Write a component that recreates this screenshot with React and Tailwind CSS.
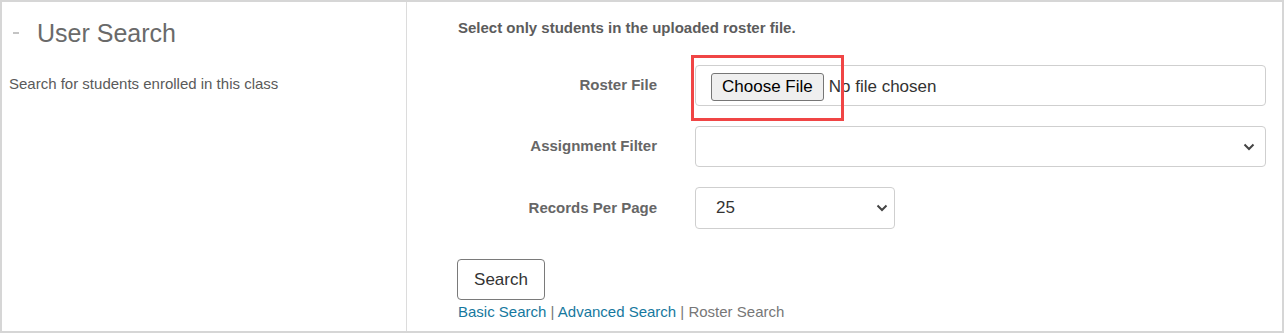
const Chevron = () => (
  <svg width="12" height="8" viewBox="0 0 12 8" className="shrink-0">
    <polyline points="1.5,1.5 6,6 10.5,1.5" fill="none" stroke="#444" strokeWidth="2" />
  </svg>
);

export default function App() {
  return (
    <div
      className="w-[1284px] h-[333px] border-2 border-[#d6d6d6] bg-white flex overflow-hidden"
      style={{ fontFamily: '"Liberation Sans", Arial, sans-serif' }}
    >
      {/* left panel */}
      <div className="w-[405px] shrink-0 border-r border-[#dcdcdc]">
        <div className="flex items-center pt-[16px] pl-[11px]">
          <span className="w-[6px] h-[2px] bg-[#c4c4c4]" />
          <h2 className="ml-[18px] text-[25px] leading-[30px] text-[#6a6a6a]">User Search</h2>
        </div>
        <p className="mt-[26px] pl-[7px] text-[15px] leading-[20px] text-[#5a5a5a]">
          Search for students enrolled in this class
        </p>
      </div>

      {/* right panel */}
      <div className="relative flex-1 pl-[50px] pr-[16px] pt-[16px]">
        <p className="pl-[1px] text-[15px] leading-[20px] font-bold text-[#5c5c5c]">
          Select only students in the uploaded roster file.
        </p>

        <div className="mt-[27px] grid grid-cols-[200px_1fr] gap-x-[38px] gap-y-[20px] items-center">
          <label className="text-right text-[15px] font-bold text-[#666]">Roster File</label>
          <div className="h-[41px] border border-[#cfcfcf] rounded-[4px] flex items-center pl-[15px] pt-[3px]">
            <span className="h-[28px] px-[10px] flex items-center bg-[#efefef] border border-[#767676] rounded-[3px] text-[17px] text-black">
              Choose File
            </span>
            <span className="ml-[5px] text-[17px] text-[#333]">No file chosen</span>
          </div>

          <label className="text-right text-[15px] font-bold text-[#666]">Assignment Filter</label>
          <div className="h-[41px] border border-[#cfcfcf] rounded-[4px] flex items-center justify-end pr-[10px]">
            <Chevron />
          </div>

          <label className="text-right text-[15px] font-bold text-[#666]">Records Per Page</label>
          <div className="w-[200px] h-[42px] border border-[#cfcfcf] rounded-[4px] flex items-center justify-between pl-[20px] pr-[6px]">
            <span className="text-[17px] text-[#333]">25</span>
            <Chevron />
          </div>
        </div>

        <button className="mt-[30px] w-[88px] h-[41px] border border-[#7a7a7a] rounded-[4px] bg-white text-[17px] text-[#333]">
          Search
        </button>
        <div className="mt-[2px] pl-[1px] text-[15px] leading-[20px] text-[#777]">
          <span className="text-[#16789e]">Basic Search</span>
          {' | '}
          <span className="text-[#16789e]">Advanced Search</span>
          {' | Roster Search'}
        </div>

        {/* highlight box */}
        <div className="absolute left-[284px] top-[53px] w-[153px] h-[66px] border-[3px] border-[#f04545]" />
      </div>
    </div>
  );
}
